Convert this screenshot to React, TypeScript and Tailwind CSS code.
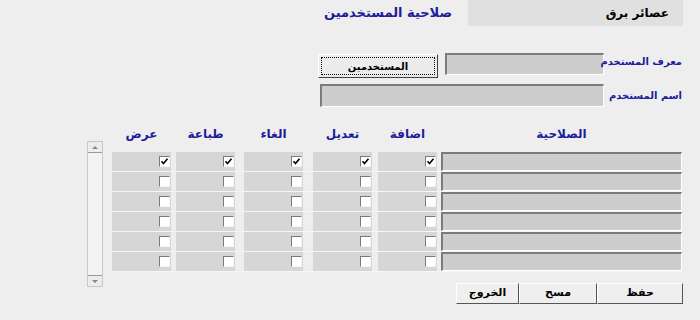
const cols = [
  { w: 'w-[59px]', ml: 'ml-0' },
  { w: 'w-[59px]', ml: 'ml-[5px]' },
  { w: 'w-[59px]', ml: 'ml-[9px]' },
  { w: 'w-[59px]', ml: 'ml-[10px]' },
  { w: 'w-[59px]', ml: 'ml-[6px]' },
]

const rows = [true, false, false, false, false, false]

function CheckBox({ checked }: { checked: boolean }) {
  return (
    <div className="w-[11px] h-[11px] bg-white border-t border-l border-t-[#7a7a7a] border-l-[#7a7a7a] border-b border-r border-b-[#f4f4f4] border-r-[#f4f4f4] flex items-center justify-center">
      {checked && (
        <svg width="9" height="9" viewBox="0 0 9 9">
          <path d="M1.5 4.2 L3.5 6.5 L7.5 1.8" stroke="#000" strokeWidth="1.6" fill="none" />
        </svg>
      )}
    </div>
  )
}

function Sunken({ className }: { className: string }) {
  return (
    <div className={`shrink-0 bg-[#cdcdcd] border-t-2 border-l-2 border-t-[#7c7c7c] border-l-[#7c7c7c] border-b border-r border-b-white border-r-white ${className}`} />
  )
}

export default function App() {
  const font = { fontFamily: '"DejaVu Sans", sans-serif' }
  return (
    <div className="w-[700px] h-[320px] bg-[#eeeeee] overflow-hidden text-[#1d1d9b]" style={font}>
      <div className="flex h-[26px] items-center">
        <div dir="rtl" className="ml-[326px] w-[126px] text-[13px] font-bold whitespace-nowrap">صلاحية المستخدمين</div>
        <div dir="rtl" className="ml-[16px] w-[215px] h-[26px] bg-[#e0e0e0] flex items-center pr-[14px] text-[12px] font-bold text-black">عصائر برق</div>
      </div>

      <div className="flex items-start mt-[27px] h-[25px]">
        <button className="shrink-0 ml-[318px] mt-[1px] w-[120px] h-[24px] bg-[#ececec] border border-t-white border-l-white border-b-[#404040] border-r-[#404040] p-[2px]">
          <div className="w-full h-full border border-dotted border-black flex items-center justify-center text-[10px] font-bold text-black">المستخدمين</div>
        </button>
        <Sunken className="ml-[7px] w-[159px] h-[22px]" />
        <div dir="rtl" className="w-[96px] pr-[18px] pt-[1px] text-[10px] font-bold whitespace-nowrap">معرف المستخدم</div>
      </div>

      <div className="flex items-start mt-[6px] h-[23px]">
        <Sunken className="ml-[320px] w-[284px] h-[23px]" />
        <div dir="rtl" className="w-[96px] pr-[18px] pt-[4px] text-[10px] font-bold whitespace-nowrap">اسم المستخدم</div>
      </div>

      <div className="flex mt-[17px] h-[20px] items-center text-[12px] font-bold">
        <div className="ml-[112px] w-[59px] text-center">عرض</div>
        <div className="ml-[5px] w-[59px] text-center">طباعة</div>
        <div className="ml-[9px] w-[59px] text-center">الغاء</div>
        <div className="ml-[10px] w-[59px] text-center">تعديل</div>
        <div className="ml-[6px] w-[59px] text-center">اضافة</div>
        <div className="ml-[4px] w-[241px] text-center">الصلاحية</div>
      </div>

      <div className="flex mt-[-2px]">
        <div className="ml-[87px] w-[16px] h-[146px] mt-[-1px] bg-[#f3f3f3] border border-[#c8c8c8] flex flex-col justify-between">
          <div className="h-[11px] border-b border-[#9a9a9a] bg-[#ececec] flex items-center justify-center">
            <div className="w-0 h-0 border-l-[3px] border-r-[3px] border-b-[3px] border-l-transparent border-r-transparent border-b-[#888]" />
          </div>
          <div className="h-[11px] border-t border-[#9a9a9a] bg-[#ececec] flex items-center justify-center">
            <div className="w-0 h-0 border-l-[3px] border-r-[3px] border-t-[3px] border-l-transparent border-r-transparent border-t-[#888]" />
          </div>
        </div>
        <div className="ml-[9px] mt-[10px] flex flex-col">
          {rows.map((checked, i) => (
            <div key={i} className="flex h-[20px] border-b border-[#f6f6f6]">
              {cols.map((c, j) => (
                <div key={j} className={`${c.w} ${c.ml} h-[19px] bg-[#d6d6d6] flex items-center justify-end pr-[1px]`}>
                  <CheckBox checked={checked} />
                </div>
              ))}
              <Sunken className="ml-[4px] w-[241px] h-[19px]" />
            </div>
          ))}
        </div>
      </div>

      <div className="flex mt-[-4px] h-[22px] text-[11px] font-bold text-black">
        <button className="ml-[456px] w-[63px] h-[21px] bg-[#efefef] border border-t-white border-l-white border-b-[#555] border-r-[#555]">الخروج</button>
        <button className="w-[78px] h-[21px] bg-[#efefef] border border-t-white border-l-white border-b-[#555] border-r-[#555]">مسح</button>
        <button className="w-[86px] h-[21px] bg-[#efefef] border border-t-white border-l-white border-b-[#555] border-r-[#555]">حفظ</button>
      </div>
    </div>
  )
}
